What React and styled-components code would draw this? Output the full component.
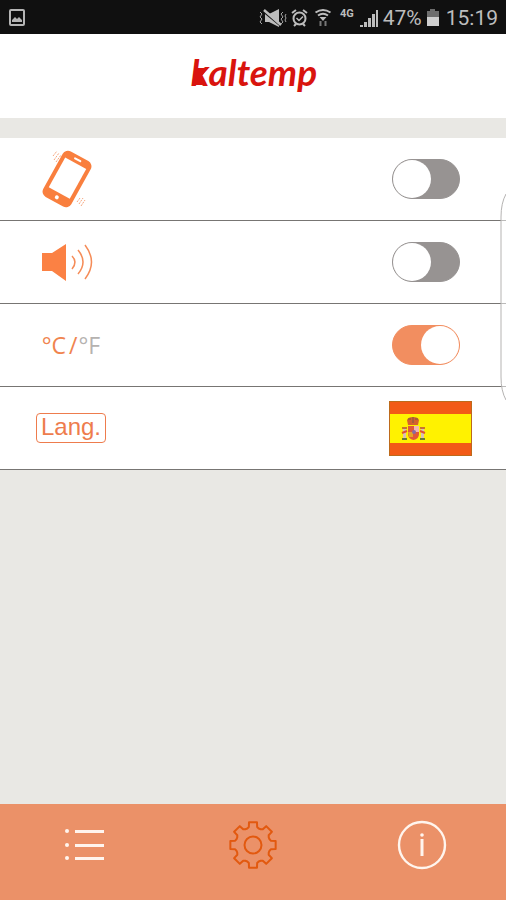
import React, { useState } from "react";
import styled, { createGlobalStyle } from "styled-components";

const GlobalStyle = createGlobalStyle`
  body {
    margin: 0;
    background-color: #e9e8e4;
    font-family: Roboto, sans-serif;
  }
  * {
    box-sizing: border-box;
  }
`;

const Page = styled.div`
  position: relative;
  display: flex;
  flex-direction: column;
  min-height: 100vh;
  overflow: hidden;
`;

const StatusBar = styled.div`
  display: flex;
  align-items: center;
  justify-content: space-between;
  height: 34px;
  padding: 2px 8px 0 8px;
  background-color: #101010;
  color: #bdbdbd;
  font-size: 21px;
  line-height: 32px;
  svg {
    display: block;
  }
`;

const StatusGroup = styled.div`
  display: flex;
  align-items: center;
  gap: 4px;
`;

const Network = styled.span`
  align-self: flex-start;
  margin: 4px 2px 0 2px;
  font-size: 11px;
  font-weight: 700;
  line-height: 16px;
`;

const Clock = styled.span`
  margin-left: 2px;
`;

const Header = styled.header`
  display: flex;
  justify-content: center;
  height: 84px;
  padding-top: 16px;
  background-color: white;
`;

const Logo = styled.h1`
  position: relative;
  margin: 0;
  padding-left: 2px;
  color: #d9140e;
  font-family: Lato, sans-serif;
  font-size: 37px;
  font-style: italic;
  font-weight: 700;
  line-height: 44px;
  svg {
    position: absolute;
    left: 0;
    top: 17px;
  }
`;

const Settings = styled.main`
  flex: 1;
  padding-top: 20px;
`;

const Row = styled.div`
  display: flex;
  align-items: center;
  justify-content: space-between;
  height: 83px;
  padding: 0 34px 0 36px;
  background-color: white;
  border-bottom: 1px solid #777573;
`;

const RowLabel = styled.label`
  display: flex;
  justify-content: center;
  width: 70px;
`;

const RowControl = styled.div`
  display: flex;
  width: 83px;
`;

const Switch = styled.input`
  appearance: none;
  display: flex;
  justify-content: ${({ checked }) => (checked ? "flex-end" : "flex-start")};
  width: 68px;
  height: 40px;
  margin: 0 0 0 3px;
  border: 1px solid ${({ checked }) => (checked ? "#f28e60" : "#979392")};
  border-radius: 20px;
  background-color: ${({ checked }) => (checked ? "#f28e60" : "#979392")};
  cursor: pointer;
  &::before {
    content: "";
    width: 38px;
    height: 38px;
    border-radius: 50%;
    background-color: white;
  }
`;

const Units = styled.span`
  display: flex;
  color: #f0844f;
  font-family: "Open Sans", sans-serif;
  font-size: 23px;
  font-weight: 400;
  line-height: 32px;
`;

const Slash = styled.span`
  margin: 0 1px 0 3px;
`;

const OtherUnit = styled.span`
  color: #b5b2b0;
`;

const LangBox = styled.span`
  width: 70px;
  height: 30px;
  border: 1px solid #ee7c4d;
  border-radius: 4px;
  color: #ee7c4d;
  font-family: "Liberation Sans", sans-serif;
  font-size: 24px;
  line-height: 26px;
  text-align: center;
`;

const FlagButton = styled.button`
  padding: 0;
  border: none;
  background: none;
  cursor: pointer;
  svg {
    display: block;
  }
`;

/* handle of the edge panel, it lies over the rows */
const EdgeHandle = styled.svg`
  position: absolute;
  right: 0;
  top: 193px;
  pointer-events: none;
`;

const NavBar = styled.nav`
  display: grid;
  grid-template-columns: repeat(3, 1fr);
  height: 96px;
  padding-top: 16px;
  background-color: #eb9168;
`;

const NavLink = styled.a`
  display: flex;
  justify-content: center;
  color: ${({ $active }) => ($active ? "#e2590f" : "#fff5ee")};
  svg {
    display: block;
  }
`;

const StatusIcons = () => (
  <>
    <svg width="28" height="20" viewBox="0 0 28 20" fill="#bdbdbd">
      <path d="M6 6h4l10-5v18l-10-5H6z" />
      <path d="M5 4l17 14" stroke="#101010" strokeWidth="2" />
      <path d="M5 2l17 15" stroke="#bdbdbd" strokeWidth="2.500" />
      <path
        d="M1 4l2 2-2 3 2 2-2 3 2 2M24 4l-2 2 2 3-2 2 2 3-2 2M27 6l-1 2 1 2-1 2 1 2"
        stroke="#a5a5a5"
        fill="none"
      />
    </svg>
    <svg width="17" height="20" viewBox="0 0 17 20" fill="none" stroke="#bdbdbd" strokeWidth="2">
      <circle cx="8.5" cy="10.5" r="6" />
      <path d="M1 5l4-3M16 5l-4-3M3 18l2-2M14 18l-2-2" />
      <path d="M5.5 10l2.500 2.500 4-4" strokeWidth="1.500" />
    </svg>
    <svg width="22" height="20" viewBox="1 0 22 20" fill="none" stroke="#bdbdbd" strokeWidth="2">
      <path d="M4.500 4.500q7.500-5 15 0M7 7.500q5-3.500 10 0" />
      <path d="M8.500 9h7L12 13z" fill="#bdbdbd" stroke="none" />
      <path d="M9.500 13v5M14.500 13v5" stroke="#777" />
    </svg>
  </>
);

const SignalIcon = () => (
  <svg width="19" height="19" viewBox="0 0 19 19" fill="#bdbdbd">
    <path d="M0 16h3v2H0zM4 13h3v5H4zM8 9h3v9H8zM12 5h3v13h-3zM16 1h2v17h-2z" />
  </svg>
);

const BatteryIcon = () => (
  <svg width="14" height="18" viewBox="0 0 14 18">
    <path d="M4 0h5v2h4v7H1V2h3z" fill="#6d6d6d" />
    <path d="M1 8h12v9H1z" fill="#cfcfcf" />
  </svg>
);

const PictureIcon = () => (
  <svg width="18" height="18" viewBox="0 0 18 18">
    <rect x="2" y="1" width="14" height="15" rx="1" fill="none" stroke="#b5b5b5" strokeWidth="2" />
    <path d="M4 13v-2l3-3 2 2 2-2 3 3v2z" fill="#b5b5b5" />
  </svg>
);

const PhoneIcon = () => (
  <svg width="70" height="60" viewBox="0 0 70 60">
    <g transform="rotate(29 31 30)">
      <rect x="15" y="4" width="32" height="52" rx="6" fill="#f97f3e" />
      <rect x="19" y="12" width="24" height="34" fill="white" />
      <rect x="27" y="7" width="8" height="2" rx="1" fill="white" />
      <circle cx="31" cy="51" r="2" fill="white" />
    </g>
    <g fill="none" stroke="#f6a67e" strokeWidth="1">
      <path d="M18 11l5-7M20 13l5-7M17 7l4-5M43 55l4-6M45 57l4-6M41 53l3-4" strokeDasharray="2 1" />
    </g>
  </svg>
);

const SpeakerIcon = () => (
  <svg width="70" height="40" viewBox="0 0 70 40">
    <path d="M6 11h10L30 2v37L16 29H6z" fill="#fb8144" />
    <g fill="none" stroke="#f58c58" strokeWidth="1.500">
      <path d="M36 14q6 6 0 13" />
      <path d="M42 8q10 12 0 24" />
      <path d="M49 3q13 17 0 34" />
    </g>
  </svg>
);

const SpainFlag = () => (
  <svg width="83" height="55" viewBox="0 0 83 55">
    <rect width="83" height="55" fill="#f25a17" />
    <rect y="13" width="83" height="29" fill="#fff200" />
    <rect x="0.500" y="0.500" width="82" height="54" fill="none" stroke="#bd6a1b" />
    <path d="M18 19q1-3 6-3t6 3l-1 5H19z" fill="#d4612e" />
    <path d="M19 18h3M26 18h3M24 16v6" stroke="#795f42" />
    <path d="M19 25h11v8q0 5-5.500 6Q19 38 19 33z" fill="#e15838" />
    <path d="M25 25h5v6h-5z" fill="#efb6b5" />
    <path d="M19 31h5v5h-4z" fill="#e7a425" />
    <circle cx="25" cy="31" r="2" fill="#8a6aa0" />
    <path d="M14 28h3v9h-3zM32 28h3v9h-3z" fill="#d9c0b4" />
    <path d="M13 32l5-2M31 30l5 2" stroke="#df5135" strokeWidth="2" />
    <path d="M13 27h5M31 27h5" stroke="#c7742f" strokeWidth="2" />
    <path d="M13 38h5M31 38h5" stroke="#697b37" strokeWidth="2" />
  </svg>
);

const ListIcon = () => (
  <svg width="40" height="50" viewBox="0 0 40 50" fill="currentColor">
    {[11, 25, 38].map((y) => (
      <g key={y}>
        <circle cx="3" cy={y} r="2" />
        <rect x="11" y={y - 1} width="29" height="3" />
      </g>
    ))}
  </svg>
);

// the outline of one tooth, turned eight times around the centre
const gearPoints = () => {
  const tooth = [
    [17.5, -19],
    [18.5, -13],
    [23, -10],
    [23, 10],
    [18.5, 13],
    [17.5, 19],
  ];
  const points = [];
  for (let i = 0; i < 8; i++) {
    tooth.forEach(([radius, degrees]) => {
      const angle = ((i * 45 + degrees) * Math.PI) / 180;
      points.push(`${25 + radius * Math.cos(angle)},${25 + radius * Math.sin(angle)}`);
    });
  }
  return points.join(" ");
};

const GearIcon = () => (
  <svg width="50" height="50" viewBox="0 0 50 50" fill="none" stroke="currentColor" strokeWidth="2">
    <polygon points={gearPoints()} strokeLinejoin="round" />
    <circle cx="25" cy="25" r="8.500" />
  </svg>
);

const InfoIcon = () => (
  <svg width="50" height="50" viewBox="0 0 50 50" fill="none" stroke="currentColor">
    <circle cx="25" cy="25" r="23" strokeWidth="2.400" />
    <path d="M25 19v17" strokeWidth="3" />
    <circle cx="25" cy="15" r="1.800" fill="currentColor" stroke="none" />
  </svg>
);

const App = () => {
  const [vibration, setVibration] = useState(false);
  const [sound, setSound] = useState(false);
  const [celsius, setCelsius] = useState(true);

  return (
    <Page>
      <GlobalStyle />
      <StatusBar>
        <PictureIcon />
        <StatusGroup>
          <StatusIcons />
          <Network>4G</Network>
          <SignalIcon />
          <span>47%</span>
          <BatteryIcon />
          <Clock>15:19</Clock>
        </StatusGroup>
      </StatusBar>
      <Header>
        <Logo>
          kaltemp
          <svg width="20" height="20" viewBox="0 0 20 20">
            <path d="M6 1L19 1 13 9 17 18H3z" fill="#d9140e" />
          </svg>
        </Logo>
      </Header>
      <Settings>
        <Row>
          <RowLabel htmlFor="vibration">
            <PhoneIcon />
          </RowLabel>
          <RowControl>
            <Switch
              id="vibration"
              type="checkbox"
              aria-label="Vibration"
              checked={vibration}
              onChange={(event) => setVibration(event.target.checked)}
            />
          </RowControl>
        </Row>
        <Row>
          <RowLabel htmlFor="sound">
            <SpeakerIcon />
          </RowLabel>
          <RowControl>
            <Switch
              id="sound"
              type="checkbox"
              aria-label="Sound"
              checked={sound}
              onChange={(event) => setSound(event.target.checked)}
            />
          </RowControl>
        </Row>
        <Row>
          <RowLabel htmlFor="units">
            <Units>
              °C<Slash>/</Slash>
              <OtherUnit>°F</OtherUnit>
            </Units>
          </RowLabel>
          <RowControl>
            <Switch
              id="units"
              type="checkbox"
              checked={celsius}
              onChange={(event) => setCelsius(event.target.checked)}
            />
          </RowControl>
        </Row>
        <Row>
          <RowLabel htmlFor="language">
            <LangBox>Lang.</LangBox>
          </RowLabel>
          <RowControl>
            <FlagButton id="language" type="button">
              <SpainFlag />
            </FlagButton>
          </RowControl>
        </Row>
      </Settings>
      <EdgeHandle width="6" height="208" viewBox="0 0 6 208">
        <path d="M6 1Q1 10 1 24V184Q1 198 6 207" fill="white" fillOpacity="0.500" stroke="#b5b3b2" />
      </EdgeHandle>
      <NavBar>
        <NavLink href="#list" aria-label="List">
          <ListIcon />
        </NavLink>
        <NavLink href="#settings" aria-label="Settings" $active>
          <GearIcon />
        </NavLink>
        <NavLink href="#info" aria-label="Info">
          <InfoIcon />
        </NavLink>
      </NavBar>
    </Page>
  );
};

export default App;
